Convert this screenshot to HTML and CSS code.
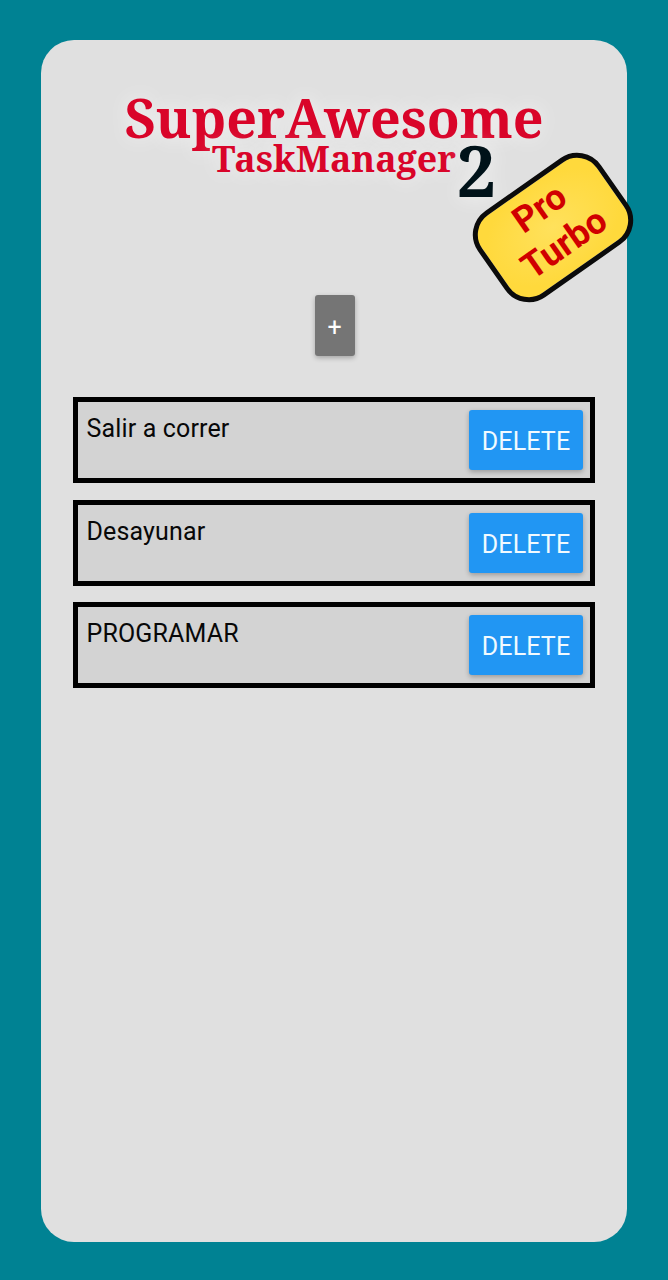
FILE: index.html
```html
<!DOCTYPE html>
<html lang="es">
<head>
<meta charset="utf-8">
<title>SuperAwesome TaskManager 2</title>
<link rel="stylesheet" href="styles.css">
</head>
<body>
<main class="card">
  <header class="logo">
    <h1 class="title"><span class="title-text">SuperAwesome</span></h1>
    <div class="subtitle"><span class="name">TaskManager</span><span class="two">2</span></div>
    <div class="badge">Pro<br>Turbo</div>
  </header>
  <button class="btn add">+</button>
  <ul class="tasks">
    <li class="task"><span class="label">Salir a correr</span><button class="btn delete">DELETE</button></li>
    <li class="task"><span class="label">Desayunar</span><button class="btn delete">DELETE</button></li>
    <li class="task"><span class="label">PROGRAMAR</span><button class="btn delete">DELETE</button></li>
  </ul>
</main>
</body>
</html>
```
FILE: styles.css
```css
* { box-sizing: border-box; }
body {
  margin: 0;
  height: 1280px;
  padding: 40px 41px 38px;
  background: #008293;
  font-family: Roboto, "Liberation Sans", sans-serif;
}
.card {
  height: 1202px;
  padding: 50px 32px 0;
  border-radius: 33px;
  background: #e0e0e0;
  display: flex;
  flex-direction: column;
  align-items: center;
}
.logo {
  position: relative;
  width: 522px;
  height: 205px;
  font-family: "Noto Serif", "DejaVu Serif Condensed", "DejaVu Serif", serif;
  font-weight: bold;
  color: #d90429;
  text-shadow: 0 0 20px #fffb;
}
.title {
  margin: 0;
  height: 55px;
  font-size: 53.8px;
  line-height: 55px;
  text-align: center;
  white-space: nowrap;
}
.subtitle {
  display: flex;
  padding-left: 139px;
  line-height: 52px;
  font-size: 35.8px;
}
.name { width: 244.5px; height: 52px; line-height: 26px; white-space: nowrap; }
.two { color: #001219; font-size: 70px; line-height: 50px; }
.badge {
  position: absolute;
  left: 405px;
  top: 85px;
  width: 150px;
  height: 105px;
  padding-top: 3px;
  border: 5px solid #0b0b0b;
  border-radius: 29px;
  background: radial-gradient(ellipse at 50% 50%, #ffe15c, #ffd93c 75%);
  color: #d00000;
  font: bold 36px/43px Roboto, sans-serif;
  text-align: center;
  text-shadow: none;
  transform: rotate(-35deg);
}
.btn {
  border: 0;
  border-radius: 3px;
  height: 61px;
  padding: 2px 0 0;
  color: #fff;
  font: 25px/59px Roboto, sans-serif;
  box-shadow: 0 2px 5px #0004;
}
.add { width: 40px; margin-left: 1px; padding-top: 4px; line-height: 57px; background: #757575; }
.tasks {
  list-style: none;
  margin: 41px 0 0;
  padding: 0;
  width: 522px;
  display: flex;
  flex-direction: column;
  gap: 16.5px;
}
.task {
  height: 86px;
  border: 5px solid #000;
  background: #d3d3d3;
  display: flex;
  justify-content: space-between;
  padding: 8px 7px 0 8.5px;
}
.label { font-size: 25px; line-height: 38px; letter-spacing: .15px; color: #080808; }
.delete { width: 114px; height: 60px; background: #2196f3; color: #f1faff; letter-spacing: .15px; }
```
